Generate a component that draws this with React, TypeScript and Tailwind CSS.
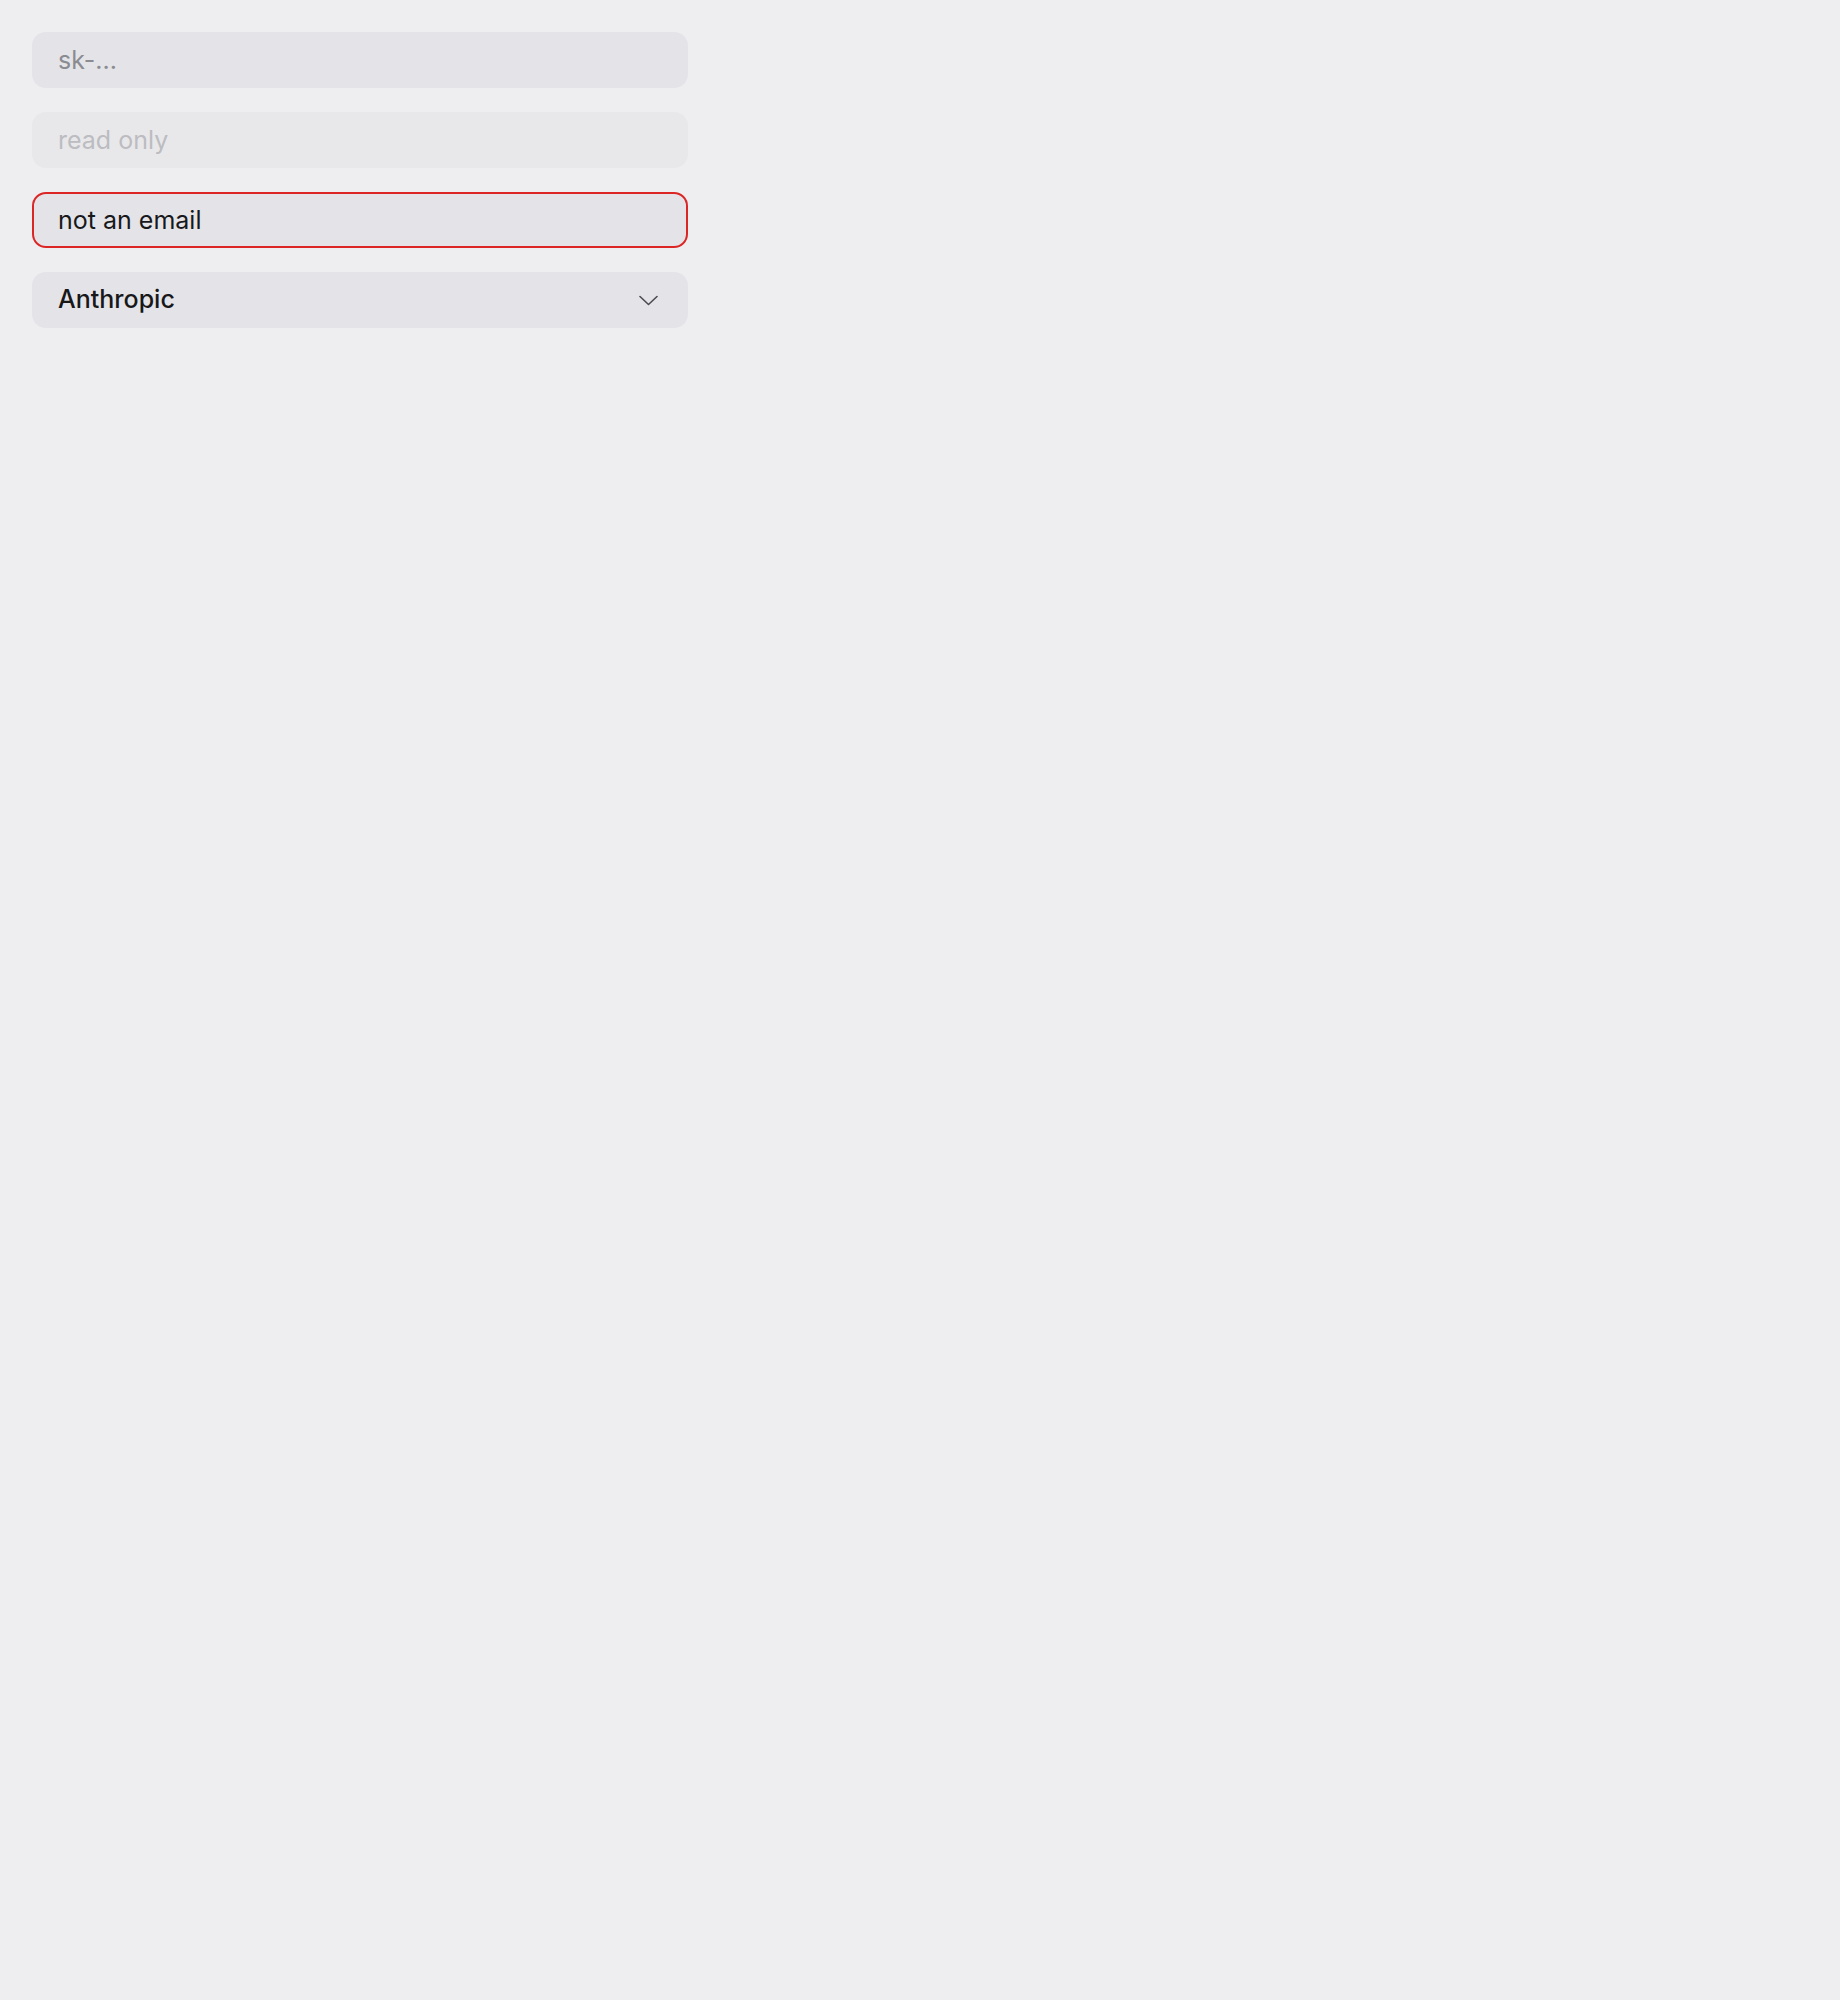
export default function App() {
    return (
        <div className="min-h-[2000px] w-full bg-[#eeeef0] p-8" style={{ fontFamily: 'Inter, "Liberation Sans", sans-serif' }}>
            <div className="flex w-[656px] flex-col gap-6">
                <input
                    className="h-14 w-full rounded-[14px] border-2 border-transparent bg-[#e4e4e8] px-6 text-[25px] text-[#18181b] outline-none placeholder:text-[#8b8b92]"
                    placeholder="sk-..."
                />
                <input
                    readOnly
                    className="h-14 w-full rounded-[14px] border-2 border-transparent bg-[#e8e8eb] px-6 text-[25px] text-[#18181b] outline-none placeholder:text-[#bcbcc1]"
                    placeholder="read only"
                />
                <input
                    className="h-14 w-full rounded-[14px] border-2 border-[#dc2626] bg-[#e4e4e8] px-6 text-[25px] text-[#18181b] outline-none"
                    defaultValue="not an email"
                />
                <button className="flex h-14 w-full items-center justify-between rounded-[14px] border-2 border-transparent bg-[#e4e4e8] pl-6 pr-[28px] text-[25px] font-medium text-[#18181b]">
                    <span>Anthropic</span>
                    <svg width="19" height="11" viewBox="0 0 19 11" fill="none" stroke="#4b4b52" strokeWidth="1.6" strokeLinecap="round" strokeLinejoin="round">
                        <polyline points="1,1.5 9.5,9.5 18,1.5" />
                    </svg>
                </button>
            </div>
        </div>
    )
}
